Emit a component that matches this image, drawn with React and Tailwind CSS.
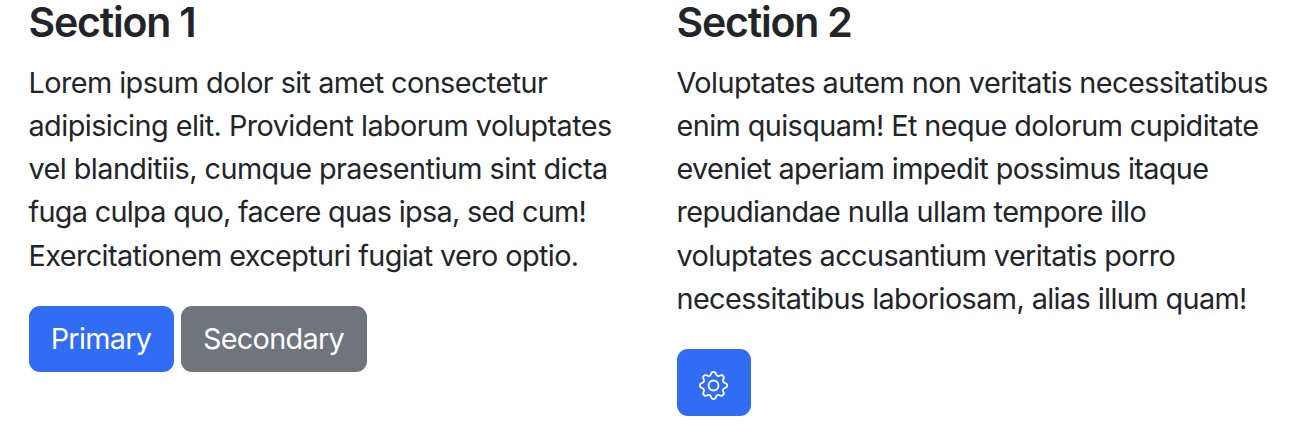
import { BsGear } from "react-icons/bs";

function Line({ children, className }) {
  return <span className={`block w-max whitespace-nowrap ${className}`}>{children}</span>;
}

function Section({ title, lines, children }) {
  return (
    <section className="w-[648px] shrink-0 pl-[28.5px]">
      <h2 className="w-max text-[41px] leading-[44px] font-semibold tracking-[-1.2px]">{title}</h2>
      <p className="mt-[16.8px] text-[28.8px] leading-[43.2px]">
        {lines.map(([text, cls]) => (
          <Line key={text} className={cls}>{text}</Line>
        ))}
      </p>
      <div className="mt-[29.2px] flex gap-[7px]">{children}</div>
    </section>
  );
}

const first = [
  ["Lorem ipsum dolor sit amet consectetur", "tracking-[-0.56px]"],
  ["adipisicing elit. Provident laborum voluptates", "tracking-[-0.55px]"],
  ["vel blanditiis, cumque praesentium sint dicta", "tracking-[-0.55px]"],
  ["fuga culpa quo, facere quas ipsa, sed cum!", "tracking-[-0.69px]"],
  ["Exercitationem excepturi fugiat vero optio.", "tracking-[-0.59px]"],
];

const second = [
  ["Voluptates autem non veritatis necessitatibus", "tracking-[-0.56px]"],
  ["enim quisquam! Et neque dolorum cupiditate", "tracking-[-0.58px]"],
  ["eveniet aperiam impedit possimus itaque", "tracking-[-0.62px]"],
  ["repudiandae nulla ullam tempore illo", "tracking-[-0.58px]"],
  ["voluptates accusantium veritatis porro", "tracking-[-0.58px]"],
  ["necessitatibus laboriosam, alias illum quam!", "tracking-[-0.59px]"],
];

export default function App() {
  return (
    <main className="flex h-[440px] overflow-hidden bg-white font-['Inter',sans-serif] text-[#212529]">
      <Section title="Section 1" lines={first}>
        <button className="h-[66px] w-[145px] rounded-[11px] bg-[#316cf4] text-[28.8px] tracking-[-0.7px] text-white">Primary</button>
        <button className="h-[66px] w-[186px] rounded-[11px] bg-[#6f757c] text-[28.8px] tracking-[-0.7px] text-white">Secondary</button>
      </Section>
      <Section title="Section 2" lines={second}>
        <button aria-label="Settings" className="flex h-[67px] w-[74px] items-center justify-center rounded-[11px] bg-[#316cf4] text-white">
          <BsGear className="mt-[5px] size-[29px]" />
        </button>
      </Section>
    </main>
  );
}
